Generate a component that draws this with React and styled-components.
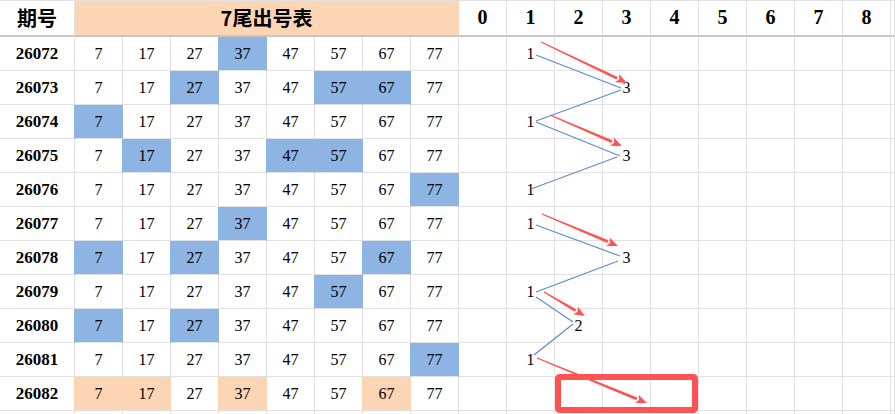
import React from 'react';
import styled, { createGlobalStyle } from 'styled-components';

const GlobalStyle = createGlobalStyle`
  html, body {
    margin: 0;
    padding: 0;
    background: #fff;
  }
`;

const GRID = '#e2e2e2';
const BLUE = '#8db4e2';
const PEACH = '#fcd5b4';
const RED = '#ff5353';
const LINE_BLUE = '#5f8dcc';

const tails = [7, 17, 27, 37, 47, 57, 67, 77];

const rows = [
  { id: 26072, hits: [37] },
  { id: 26073, hits: [27, 57, 67] },
  { id: 26074, hits: [7] },
  { id: 26075, hits: [17, 47, 57] },
  { id: 26076, hits: [77] },
  { id: 26077, hits: [37] },
  { id: 26078, hits: [7, 27, 67] },
  { id: 26079, hits: [57] },
  { id: 26080, hits: [7, 27] },
  { id: 26081, hits: [77] },
  { id: 26082, picks: [7, 17, 37, 67], hits: [] },
];

// trend line between the hit counts, drawn over the grid
const blueLines = [
  [536, 55, 621, 88],
  [621, 90, 536, 121],
  [536, 122, 620, 156],
  [617, 157, 531, 189],
  [536, 225, 620, 256],
  [618, 261, 536, 292],
  [536, 297, 573, 322],
  [573, 324, 534, 355],
];

const arrows = [
  [541, 42, 627, 83],
  [550, 115, 622, 146],
  [542, 214, 618, 246],
  [544, 292, 585, 316],
  [537, 358, 647, 403],
];

const Sheet = styled.div`
  position: relative;
  width: 895px;
  height: 414px;
  overflow: hidden;
  background: #fff;
  display: grid;
  grid-template-columns: 75px repeat(17, 48px) 1fr;
  grid-template-rows: 37px;
  grid-auto-rows: 34px;
`;

const HeadCell = styled.div`
  box-sizing: border-box;
  display: flex;
  align-items: center;
  justify-content: center;
  border-top: 1px solid ${GRID};
  border-bottom: 2px solid #c6c6c6;
  border-right: 1px solid ${(p) => (p.$fill ? p.$fill : GRID)};
  background: ${(p) => p.$fill || '#fff'};
  grid-column: ${(p) => (p.$span ? `span ${p.$span}` : 'auto')};
  color: #000;
  font-weight: bold;
  font-family: ${(p) =>
    p.$cjk
      ? '"Noto Sans CJK SC", sans-serif'
      : '"Liberation Serif", "Noto Sans CJK SC", serif'};
  font-size: 20px;
  padding-bottom: 1px;
`;

const Cell = styled.div`
  box-sizing: border-box;
  display: flex;
  align-items: center;
  justify-content: center;
  border-bottom: 1px solid ${GRID};
  border-right: 1px solid ${(p) => (p.$fill ? p.$fill : GRID)};
  background: ${(p) => p.$fill || '#fff'};
  box-shadow: ${(p) => (p.$fill ? `-1px 0 0 0 ${p.$fill}` : 'none')};
  font-family: "Liberation Serif", serif;
  font-size: ${(p) => (p.$bold ? '17px' : '16px')};
  font-weight: ${(p) => (p.$bold ? 'bold' : 'normal')};
  color: #000;
`;

const Overlay = styled.svg`
  position: absolute;
  left: 0;
  top: 0;
  pointer-events: none;
`;

function Arrow({ x1, y1, x2, y2 }) {
  const dx = x2 - x1;
  const dy = y2 - y1;
  const len = Math.hypot(dx, dy);
  const ux = dx / len;
  const uy = dy / len;
  const head = 11;
  const half = 4.5;
  const bx = x2 - ux * head;
  const by = y2 - uy * head;
  const pts = [
    `${x2},${y2}`,
    `${bx - uy * half},${by + ux * half}`,
    `${bx + ux * 2.5},${by + uy * 2.5}`,
    `${bx + uy * half},${by - ux * half}`,
  ].join(' ');
  const body = [
    `${x1 - uy * 0.6},${y1 + ux * 0.6}`,
    `${bx - uy * 1.5},${by + ux * 1.5}`,
    `${bx + uy * 1.5},${by - ux * 1.5}`,
    `${x1 + uy * 0.6},${y1 - ux * 0.6}`,
  ].join(' ');
  return (
    <g fill={RED}>
      <polygon points={body} />
      <polygon points={pts} />
    </g>
  );
}

export default function App() {
  return (
    <>
      <GlobalStyle />
      <Sheet>
        <HeadCell $cjk>期号</HeadCell>
        <HeadCell $cjk $span={8} $fill={PEACH}>
          7尾出号表
        </HeadCell>
        {Array.from({ length: 9 }, (_, i) => (
          <HeadCell key={i}>{i}</HeadCell>
        ))}
        <HeadCell />

        {rows.map((row) => (
          <React.Fragment key={row.id}>
            <Cell $bold>{row.id}</Cell>
            {tails.map((t) => {
              let fill;
              if (row.hits.includes(t)) fill = BLUE;
              if (row.picks && row.picks.includes(t)) fill = PEACH;
              return (
                <Cell key={t} $fill={fill}>
                  {t}
                </Cell>
              );
            })}
            {Array.from({ length: 9 }, (_, i) => (
              <Cell key={`c${i}`}>
                {row.hits.length > 0 && row.hits.length === i ? i : ''}
              </Cell>
            ))}
            <Cell />
          </React.Fragment>
        ))}

        {Array.from({ length: 19 }, (_, i) => (
          <Cell key={`e${i}`} />
        ))}

        <Overlay width="895" height="414" viewBox="0 0 895 414">
          <g stroke={LINE_BLUE} strokeWidth="1.3" fill="none">
            {blueLines.map(([x1, y1, x2, y2], i) => (
              <line key={i} x1={x1} y1={y1} x2={x2} y2={y2} />
            ))}
          </g>
          {arrows.map(([x1, y1, x2, y2], i) => (
            <Arrow key={i} x1={x1} y1={y1} x2={x2} y2={y2} />
          ))}
          <rect
            x="558"
            y="377"
            width="137"
            height="33"
            rx="1.5"
            fill="none"
            stroke={RED}
            strokeWidth="6"
          />
        </Overlay>
      </Sheet>
    </>
  );
}
